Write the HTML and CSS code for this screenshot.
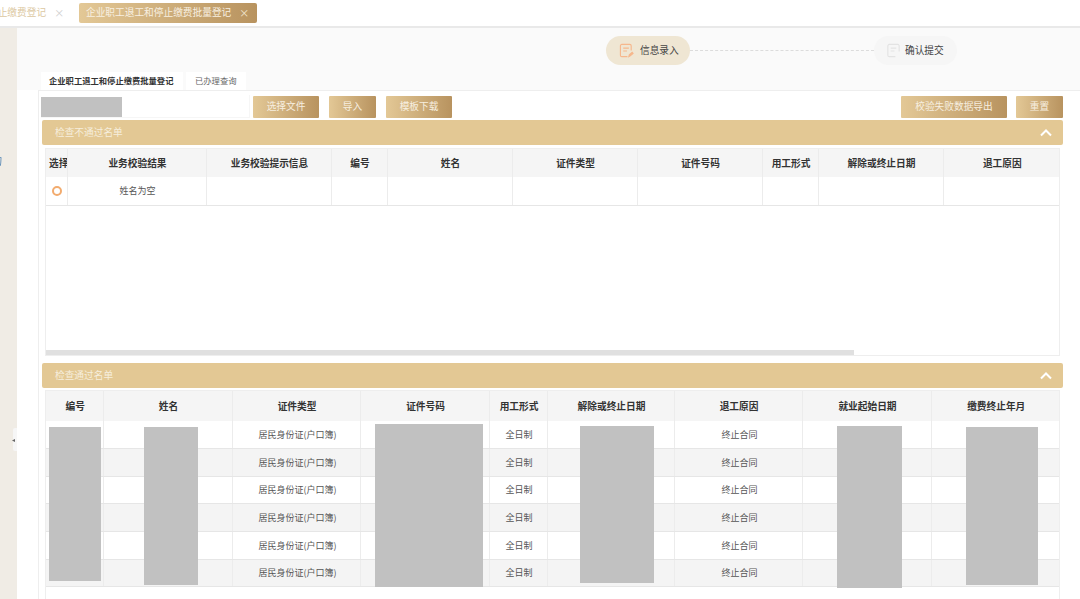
FILE: index.html
```html
<!DOCTYPE html>
<html lang="zh-CN">
<head>
<meta charset="utf-8">
<title>企业职工退工和停止缴费批量登记</title>
<link rel="stylesheet" href="styles.css">
</head>
<body>
<header class="topbar">
  <div class="toptab"><span>停止缴费登记</span><i class="x">×</i></div>
  <div class="toptab active"><span>企业职工退工和停止缴费批量登记</span><i class="x">×</i></div>
</header>
<div class="layout">
  <aside class="sidebar"><span class="sidetext">询</span><span class="handle">◂</span></aside>
  <main class="content">
    <section class="stepzone">
      <div class="steps">
        <div class="step on">
          <svg class="stepicon" viewBox="0 0 16 16" fill="none" stroke="#f6b78c" stroke-width="1.2"><path d="M13 8V3a1.500 1.500 0 0 0-1.500-1.500H3A1.500 1.500 0 0 0 1.500 3v10A1.500 1.500 0 0 0 3 14.500h6"/><path d="M4.500 5.500h6M4.500 8.500h4"/><path d="M10.500 14.500l.5-2 3-2.500 1 1.200-3 2.500z" fill="#f6b78c"/></svg>
          <span>信息录入</span>
        </div>
        <div class="dash"></div>
        <div class="step off">
          <svg class="stepicon" viewBox="0 0 16 16" fill="none" stroke="#e3e3e3" stroke-width="1.2"><path d="M14 9V3a1.500 1.500 0 0 0-1.500-1.500H3.500A1.500 1.500 0 0 0 2 3v10a1.500 1.500 0 0 0 1.500 1.500H10"/><path d="M5 5.500h6M5 8.500h4"/></svg>
          <span>确认提交</span>
        </div>
      </div>
      <nav class="tabs">
        <div class="tab cur">企业职工退工和停止缴费批量登记</div>
        <div class="tab">已办理查询</div>
      </nav>
    </section>
    <section class="pane">
      <div class="toolbar">
        <div class="filebox"><div class="redact-file"></div></div>
        <button class="btn w66 gap3">选择文件</button>
        <button class="btn w47 gap10">导入</button>
        <button class="btn w66 gap10">模板下载</button>
        <button class="btn w106 push">校验失败数据导出</button>
        <button class="btn w47 gap9">重置</button>
      </div>

      <div class="panelhead"><span>检查不通过名单</span><svg class="chev" viewBox="0 0 12 8" fill="none" stroke="#fff" stroke-width="2"><path d="M1 6.500l5-5 5 5"/></svg></div>
      <div class="tablewrap t1">
        <table class="grid one">
          <colgroup><col class="c21"><col class="c139"><col class="c125"><col class="c56"><col class="c125"><col class="c125"><col class="c125"><col class="c56"><col class="c125"><col class="c117"></colgroup>
          <thead><tr><th class="clip">选择</th><th>业务校验结果</th><th>业务校验提示信息</th><th>编号</th><th>姓名</th><th>证件类型</th><th>证件号码</th><th>用工形式</th><th>解除或终止日期</th><th>退工原因</th></tr></thead>
          <tbody><tr><td><span class="radio"></span></td><td>姓名为空</td><td></td><td></td><td></td><td></td><td></td><td></td><td></td><td></td></tr></tbody>
        </table>
        <div class="scrolltrack"><div class="scrollthumb"></div></div>
      </div>

      <div class="panelhead second"><span>检查通过名单</span><svg class="chev" viewBox="0 0 12 8" fill="none" stroke="#fff" stroke-width="2"><path d="M1 6.500l5-5 5 5"/></svg></div>
      <div class="tablewrap t2">
        <table class="grid two">
          <colgroup><col class="c57"><col class="c129"><col class="c128"><col class="c129"><col class="c58"><col class="c127"><col class="c128"><col class="c129"><col class="c129"></colgroup>
          <thead><tr><th>编号</th><th>姓名</th><th>证件类型</th><th>证件号码</th><th>用工形式</th><th>解除或终止日期</th><th>退工原因</th><th>就业起始日期</th><th>缴费终止年月</th></tr></thead>
          <tbody>
            <tr><td></td><td></td><td>居民身份证(户口簿)</td><td></td><td>全日制</td><td></td><td>终止合同</td><td></td><td></td></tr>
            <tr><td></td><td></td><td>居民身份证(户口簿)</td><td></td><td>全日制</td><td></td><td>终止合同</td><td></td><td></td></tr>
            <tr><td></td><td></td><td>居民身份证(户口簿)</td><td></td><td>全日制</td><td></td><td>终止合同</td><td></td><td></td></tr>
            <tr><td></td><td></td><td>居民身份证(户口簿)</td><td></td><td>全日制</td><td></td><td>终止合同</td><td></td><td></td></tr>
            <tr><td></td><td></td><td>居民身份证(户口簿)</td><td></td><td>全日制</td><td></td><td>终止合同</td><td></td><td></td></tr>
            <tr><td></td><td></td><td>居民身份证(户口簿)</td><td></td><td>全日制</td><td></td><td>终止合同</td><td></td><td></td></tr>
          </tbody>
        </table>
        <div class="redact r1"></div>
        <div class="redact r2"></div>
        <div class="redact r3"></div>
        <div class="redact r4"></div>
        <div class="redact r5"></div>
        <div class="redact r6"></div>
      </div>
    </section>
  </main>
</div>
</body>
</html>
```
FILE: styles.css
```css
* { box-sizing: border-box; }
html, body { margin: 0; height: 599px; overflow: hidden; }
body {
  width: 1080px;
  background: #fff;
  color: #555;
  font: 9.7px/1.2 "Noto Sans CJK SC", "Liberation Sans", sans-serif;
  filter: blur(0.45px);
}

/* top tabs */
.topbar {
  height: 28px;
  display: flex;
  align-items: center;
  border-bottom: 2px solid #e9e9e9;
  overflow: hidden;
  background: #fff;
}
.toptab { display: flex; align-items: center; color: #dcc8a2; }
.toptab:first-child { margin-left: -12px; width: 91px; }
.toptab .x { font-style: normal; font-size: 10px; color: #cfcfcf; margin-left: 8px; }
.toptab.active {
  width: 178px;
  height: 20px;
  padding-left: 7px;
  border-radius: 2px;
  background: linear-gradient(90deg, #e3c896, #b8935f);
  color: #f8f0e1;
}
.toptab.active .x { color: #f3e6d0; margin-left: 8px; }

/* frame */
.layout { display: flex; height: 571px; }
.sidebar { width: 17px; flex: none; background: #f0ece5; position: relative; overflow: hidden; }
.sidetext { position: absolute; left: -8px; top: 127px; color: #4a7fb0; font-size: 10px; }
.handle {
  position: absolute; left: 13px; top: 400px; width: 4px; height: 23px;
  background: #f6f6f6; border-radius: 2px 0 0 2px;
  color: #666; font-size: 6px; line-height: 23px; text-indent: -1px;
}
.content { flex: 1; min-width: 0; background: #fff; }

/* steps */
.stepzone { height: 62px; background: #fafafa; padding-top: 8px; }
.steps { display: flex; align-items: center; margin-left: 589px; height: 29px; }
.step { width: 84px; height: 29px; border-radius: 15px; display: flex; align-items: center; color: #444; }
.step.on { background: #efe6d3; padding-left: 13px; }
.step.off { background: #f6f6f6; padding-left: 12px; width: 83px; }
.stepicon { width: 15px; height: 15px; margin-right: 6px; flex: none; }
.step.off .stepicon { margin-right: 4px; }
.dash { width: 184px; border-top: 1px dashed #dcdcdc; }
.tabs { display: flex; gap: 3px; margin: 7px 0 0 24px; height: 18px; }
.tab { height: 18px; padding: 0 9px; background: #fff; font-size: 8.3px; line-height: 17px; color: #666; white-space: nowrap; }
.tab.cur { width: 142px; color: #333; font-weight: 700; padding: 0 8px; }

/* pane */
.pane { margin-left: 21px; height: 509px; border-left: 1px solid #eee; border-top: 1px solid #eee; padding-top: 4px; }
.toolbar { display: flex; height: 24px; align-items: flex-start; padding: 0 17px 0 2px; }
.filebox { width: 209px; height: 23px; padding-top: 2px; background: #fff; border: 1px solid #f6f6f6; border-width: 0 1px 1px 0; }
.redact-file { width: 81px; height: 20px; background: #c1c1c1; }
.btn {
  height: 22px; margin-top: 1px; border: 0; border-radius: 1px; padding: 0;
  background: linear-gradient(90deg, #e3c896, #b8935f);
  color: #f7efe0; font: inherit;
}
.w66 { width: 66px; }
.w47 { width: 47px; }
.w106 { width: 106px; }
.gap3 { margin-left: 3px; }
.gap10 { margin-left: 10px; }
.gap9 { margin-left: 9px; }
.push { margin-left: auto; }

.panelhead {
  display: flex; align-items: center; justify-content: space-between;
  width: 1021px; height: 25px; margin: 1px 0 0 3px; padding: 0 11px 0 13px;
  background: #e3c894; border-radius: 2px; color: #f6eedd;
}
.panelhead.second { margin-top: 7px; }
.chev { width: 12px; height: 8px; }

/* tables */
.tablewrap { margin: 3px 0 0 6px; width: 1015px; border: 1px solid #eee; }
.tablewrap.t1 { height: 208px; display: flex; flex-direction: column; justify-content: space-between; }
.tablewrap.t2 { margin-top: 2px; height: 220px; border-bottom: 0; position: relative; }
.grid { width: 1013px; table-layout: fixed; border-collapse: collapse; }
.grid th { height: 28px; background: #f5f5f5; color: #333; font-weight: 700; font-size: 9.7px; padding: 1px 0 0 2px; border-right: 1px solid #ececec; white-space: nowrap; overflow: hidden; }
.grid th.clip { text-align: left; padding-left: 3px; }
.grid td { padding: 1px 0 0 2px; text-align: center; font-size: 9px; color: #555; border-right: 1px solid #ececec; border-bottom: 1px solid #e6e6e6; }
.grid th:last-child, .grid td:last-child { border-right: 0; }
.one td { height: 28px; }
.two th { height: 30px; }
.two td { height: 27.67px; }
.two td:nth-child(3), .two td:nth-child(7) { padding-left: 3px; }
.two tbody tr:nth-child(even) td { background: #f4f4f4; }
.radio { display: inline-block; width: 10px; height: 10px; border: 2px solid #f2ab6e; border-radius: 50%; vertical-align: middle; background: #fff; }
.c21 { width: 21px; } .c56 { width: 56px; } .c57 { width: 57px; } .c58 { width: 58px; }
.c117 { width: 116px; } .c125 { width: 125px; } .c127 { width: 127px; } .c128 { width: 128px; }
.c129 { width: 129px; } .c139 { width: 139px; }
.two .c129:last-child { width: 128px; }
.scrolltrack { height: 5px; background: #fff; }
.scrollthumb { width: 808px; height: 5px; background: #e0e0e0; }

/* redaction blocks lying over the table */
.redact { position: absolute; background: #c1c1c1; }
.r1 { left: 3px; top: 36px; width: 52px; height: 154px; }
.r2 { left: 98px; top: 36px; width: 54px; height: 158px; }
.r3 { left: 329px; top: 33px; width: 108px; height: 163px; }
.r4 { left: 534px; top: 35px; width: 74px; height: 157px; }
.r5 { left: 791px; top: 35px; width: 65px; height: 162px; }
.r6 { left: 920px; top: 36px; width: 72px; height: 158px; }
```
